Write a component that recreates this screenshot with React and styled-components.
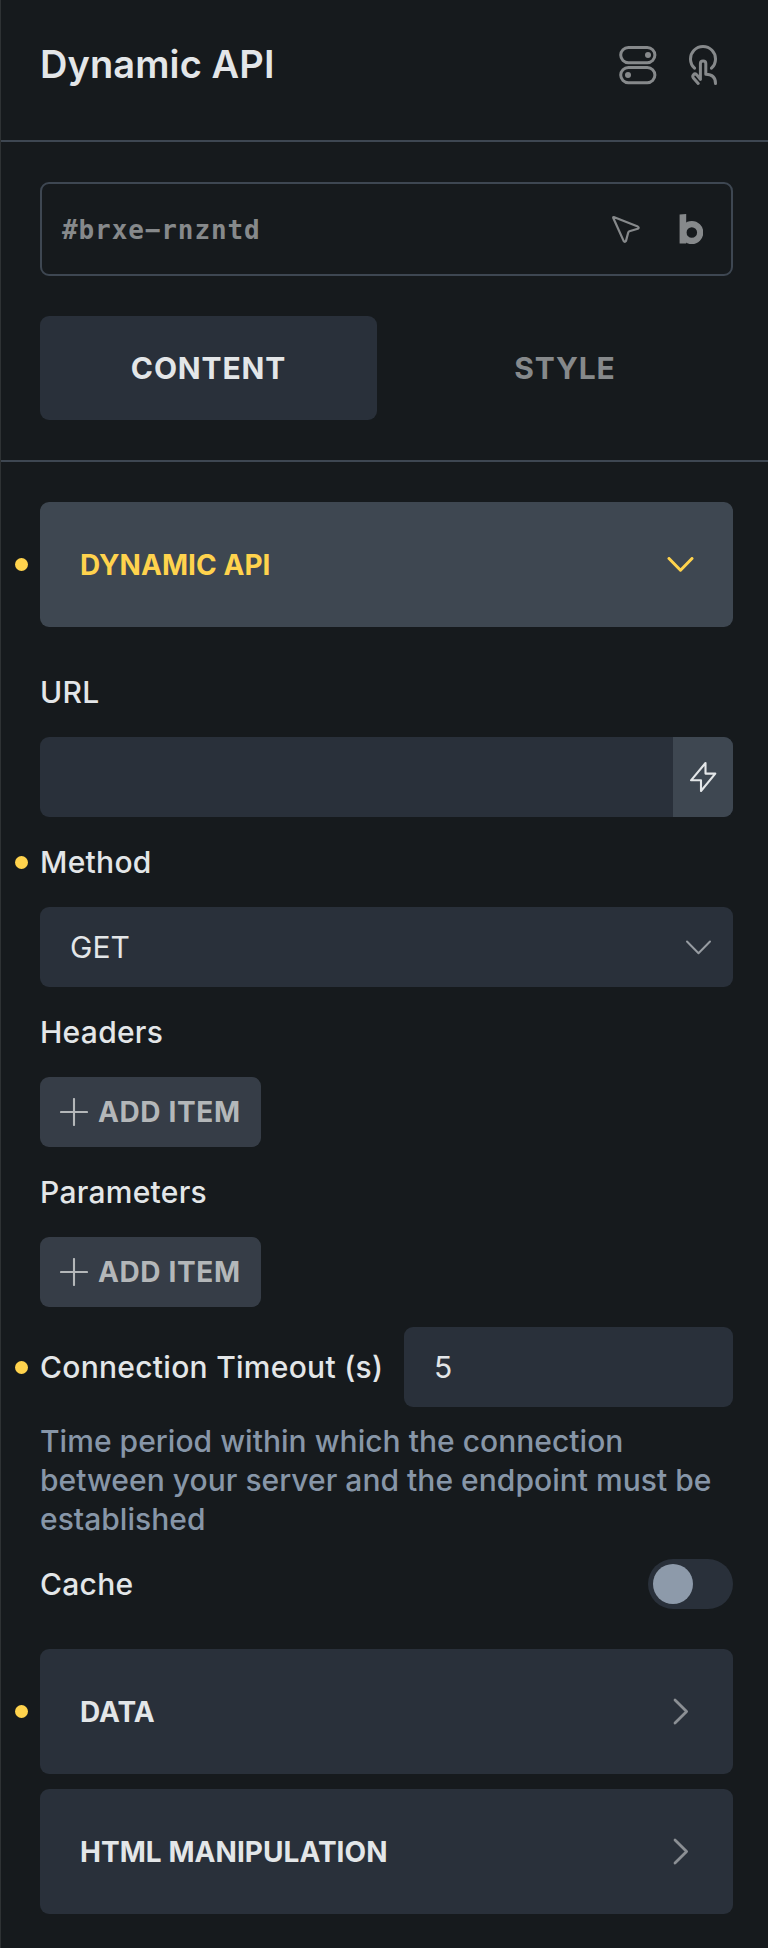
import React from "react";
import styled, { createGlobalStyle } from "styled-components";

const color = {
  bg: "#161a1d",
  edge: "#2e3234",
  line: "#3e4752",
  field: "#29303a",
  active: "#3e4751",
  button: "#363d47",
  text: "#e3e6e8",
  muted: "#86898b",
  buttonText: "#b4b7b9",
  info: "#8796a8",
  knob: "#8d9aaa",
  accent: "#ffd34d",
};

const GlobalStyle = createGlobalStyle`
  *, *::before, *::after { box-sizing: border-box; }
  body { margin: 0; background: ${color.bg}; }
  button { border: 0; padding: 0; font: inherit; letter-spacing: inherit; color: inherit; background: none; }
`;

const Panel = styled.div`
  width: 768px;
  height: 1948px;
  border-left: 1px solid ${color.edge};
  background: ${color.bg};
  color: ${color.text};
  font-family: Inter, "Liberation Sans", sans-serif;
  font-size: 30px;
  font-weight: 500;
  line-height: 39px;
`;

const Header = styled.header`
  display: flex;
  align-items: center;
  justify-content: space-between;
  height: 142px;
  padding: 0 51px 12px 39px;
  border-bottom: 2px solid ${color.line};
`;

const Title = styled.h1`
  margin: 0;
  font-size: 38px;
  font-weight: 600;
  letter-spacing: 0.1px;
`;

const IconRow = styled.div`
  display: flex;
  align-items: center;
  gap: ${(p) => p.$gap}px;
  padding-top: ${(p) => p.$top || 0}px;
  color: ${color.muted};
`;

const Toolbar = styled.section`
  padding: 40px 35px 40px 39px;
  border-bottom: 2px solid ${color.line};
`;

const IdBox = styled.div`
  display: flex;
  align-items: center;
  justify-content: space-between;
  height: 94px;
  padding: 0 28px 0 20px;
  border: 2px solid ${color.line};
  border-radius: 9px;
`;

const IdText = styled.span`
  padding-top: 2px;
  font-family: "DejaVu Sans Mono", "Liberation Mono", monospace;
  font-size: 26px;
  font-weight: 700;
  letter-spacing: 0.9px;
  color: ${color.muted};
`;

const Tabs = styled.nav`
  display: grid;
  grid-template-columns: 337px 336px;
  gap: 20px;
  margin-top: 40px;
`;

const Tab = styled.button`
  height: 104px;
  border-radius: 9px;
  font-weight: 700;
  letter-spacing: 0.85px;
  background: ${(p) => (p.$active ? color.field : "transparent")};
  color: ${(p) => (p.$active ? color.text : color.muted)};
`;

const Controls = styled.main`
  padding: 40px 35px 0 39px;
`;

const Group = styled.button`
  position: relative;
  display: flex;
  align-items: center;
  justify-content: space-between;
  width: 100%;
  height: 125px;
  padding: 0 39px 0 40px;
  border-radius: 9px;
  font-size: 28px;
  font-weight: 700;
  letter-spacing: 0.05px;
  background: ${(p) => (p.$open ? color.active : color.field)};
  color: ${(p) => (p.$open ? color.accent : color.text)};
`;

const GroupTitle = styled.span`
  padding-top: 2px;
`;

const GroupList = styled.div`
  display: grid;
  gap: 15px;
  margin-top: 40px;
`;

const Dot = styled.i`
  position: absolute;
  left: -25px;
  top: calc(50% - 6.5px);
  width: 13px;
  height: 13px;
  border-radius: 50%;
  background: ${color.accent};
`;

const Fields = styled.div`
  padding-top: 20px;
`;

const Label = styled.label`
  position: relative;
  display: flex;
  align-items: center;
  height: ${(p) => p.$height || 90}px;
  letter-spacing: 0.28px;
`;

const Field = styled.div`
  display: flex;
  align-items: center;
  justify-content: space-between;
  width: ${(p) => p.$width || "100%"};
  height: 80px;
  padding-left: 30px;
  padding-right: ${(p) => p.$right || 0}px;
  overflow: hidden;
  border-radius: 9px;
  background: ${color.field};
  font-weight: 400;
`;

const DynamicButton = styled.button`
  display: flex;
  align-items: center;
  justify-content: center;
  width: 60px;
  height: 80px;
  margin-left: auto;
  background: ${color.active};
`;

const AddButton = styled.button`
  display: flex;
  align-items: center;
  gap: 10px;
  width: 221px;
  height: 70px;
  padding-left: 20px;
  border-radius: 9px;
  background: ${color.button};
  color: ${color.buttonText};
  font-size: 28px;
  font-weight: 700;
  letter-spacing: 0.62px;
`;

const InlineRow = styled.div`
  display: flex;
  align-items: center;
  justify-content: space-between;
  margin-top: 20px;
`;

const Info = styled.p`
  margin: 15px 0 0;
  letter-spacing: 0.03px;
  color: ${color.info};
`;

const Switch = styled.button`
  width: 85px;
  height: 50px;
  padding: 5px;
  border-radius: 25px;
  background: ${color.field};
`;

const Knob = styled.span`
  display: block;
  width: 40px;
  height: 40px;
  border-radius: 50%;
  background: ${color.knob};
`;

const Svg = styled.svg`
  display: block;
  flex: none;
  fill: none;
  stroke: ${(p) => p.$color || "currentColor"};
  stroke-width: ${(p) => p.$stroke || 2.8};
  stroke-linecap: round;
  stroke-linejoin: round;
`;

const ConditionsIcon = () => (
  <Svg $stroke={3} width="38" height="40" viewBox="0 0 38 40">
    <rect x="1.7" y="2.5" width="34.2" height="15.2" rx="7.6" />
    <rect x="1.7" y="22.5" width="34.2" height="15.2" rx="7.6" />
    <circle cx="29" cy="10.1" r="3" fill="currentColor" stroke="none" />
    <circle cx="9" cy="30.1" r="3" fill="currentColor" stroke="none" />
  </Svg>
);

const InteractionsIcon = () => (
  <Svg $stroke={3} width="28" height="40" viewBox="0 0 28 40">
    <path d="M5.5 23.2A12.5 12.5 0 1 1 22.5 23.2" />
    <path d="M9.2 38.4 4.6 33.2C2.5 30.6 5.3 27.6 7.8 29.8L11.4 34.4V18.5C11.4 15.2 16.8 15.2 16.8 18.5V29.3C22.5 29.3 26.5 32 26.5 38.4" />
  </Svg>
);

const CursorIcon = () => (
  <Svg $stroke={2.2} width="28" height="28" viewBox="0 0 28 28">
    <path d="M1.7 2.1 25.8 11.6Q27.6 12.6 25.8 13.7L17.4 16.2Q16.6 16.5 16.3 17.3L14 25.9Q12.8 27.8 11.6 25.9L1.3 3Q1 1.7 1.7 2.1Z" />
  </Svg>
);

const BricksLogo = () => (
  <Svg $stroke={6.2} width="24" height="30" viewBox="-0.6 0 24 30">
    <path d="M0 .6 6.6 0V29.6H0Z" fill="currentColor" stroke="none" />
    <circle cx="12.2" cy="18.5" r="8.4" />
  </Svg>
);

const ChevronDown = ({ stroke, tone }) => (
  <Svg $stroke={stroke} $color={tone} width="27" height="15" viewBox="0 0 27 15">
    <path d="M2 1.5 13.5 13.2 25 1.5" />
  </Svg>
);

const ChevronRight = () => (
  <Svg $color="#8b8f94" width="16" height="27" viewBox="0 0 16 27">
    <path d="M2 2 13.6 13.5 2 25" />
  </Svg>
);

const RightSlot = styled.span`
  display: flex;
  padding-right: 5px;
`;

const BoltIcon = () => (
  <Svg $stroke={2.1} width="28" height="32" viewBox="0 0 28 32">
    <path d="M16.5 2V12.6H26.3L12 30V19.3H2Z" />
  </Svg>
);

const PlusIcon = () => (
  <Svg $stroke={2.1} width="28" height="28" viewBox="0 0 28 28">
    <path d="M14 1V27M1 14H27" />
  </Svg>
);

const Repeater = ({ label }) => (
  <>
    <Label>{label}</Label>
    <AddButton>
      <PlusIcon />
      <span>ADD ITEM</span>
    </AddButton>
  </>
);

const ClosedGroup = ({ title, modified }) => (
  <Group>
    {modified && <Dot />}
    <GroupTitle>{title}</GroupTitle>
    <RightSlot>
      <ChevronRight />
    </RightSlot>
  </Group>
);

export default function App() {
  return (
    <Panel>
      <GlobalStyle />
      <Header>
        <Title>Dynamic API</Title>
        <IconRow $gap={32} $top={2}>
          <ConditionsIcon />
          <InteractionsIcon />
        </IconRow>
      </Header>

      <Toolbar>
        <IdBox>
          <IdText>#brxe−rnzntd</IdText>
          <IconRow $gap={39}>
            <CursorIcon />
            <BricksLogo />
          </IconRow>
        </IdBox>
        <Tabs>
          <Tab $active>CONTENT</Tab>
          <Tab>STYLE</Tab>
        </Tabs>
      </Toolbar>

      <Controls>
        <Group $open>
          <Dot />
          <GroupTitle>DYNAMIC API</GroupTitle>
          <ChevronDown stroke={3} />
        </Group>

        <Fields>
          <Label>URL</Label>
          <Field>
            <DynamicButton>
              <BoltIcon />
            </DynamicButton>
          </Field>

          <Label>
            <Dot />
            Method
          </Label>
          <Field $right={21}>
            GET
            <ChevronDown stroke={2} tone="#969ba1" />
          </Field>

          <Repeater label="Headers" />
          <Repeater label="Parameters" />

          <InlineRow>
            <Label $height={80}>
              <Dot />
              Connection Timeout (s)
            </Label>
            <Field $width="329px">5</Field>
          </InlineRow>
          <Info>
            Time period within which the connection between your server and the
            endpoint must be established
          </Info>

          <InlineRow>
            <Label $height={50}>Cache</Label>
            <Switch>
              <Knob />
            </Switch>
          </InlineRow>
        </Fields>

        <GroupList>
          <ClosedGroup title="DATA" modified />
          <ClosedGroup title="HTML MANIPULATION" />
        </GroupList>
      </Controls>
    </Panel>
  );
}
